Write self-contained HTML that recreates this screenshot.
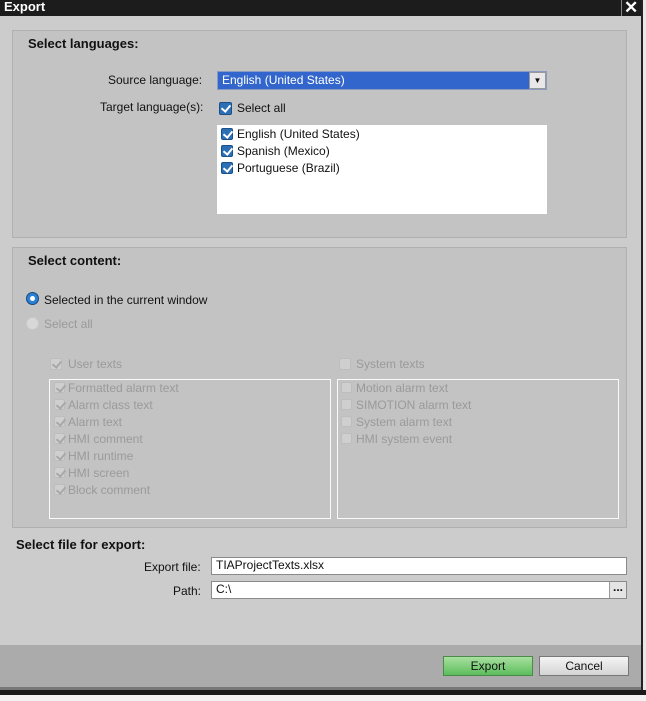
<!DOCTYPE html><html><head><style>
*{margin:0;padding:0;box-sizing:border-box}
body{width:646px;height:701px;overflow:hidden;background:#f0f0f0;font-family:"Liberation Sans",sans-serif;font-size:12px;color:#111;position:relative}
.a{position:absolute}
.dlg{left:0;top:0;width:641px;height:690px;background:#cccccc}
.title{left:0;top:0;width:641px;height:16px;background:#1c1c1c;color:#fff;font-weight:bold;font-size:13px;padding-left:4px;line-height:14px}
.panel{background:#c3c3c3;border:1px solid #b0b0b0}
.h{font-weight:bold;font-size:13px}
.cb{width:12px;height:12px;background:#2d6fb5;border:1px solid #1a4f8a;border-radius:2px}
.cb:after{content:"";position:absolute;left:3px;top:0px;width:4px;height:7px;border:solid #fff;border-width:0 2px 2px 0;transform:rotate(40deg)}
.cd{width:12px;height:12px;background:#cfcfcf;border:1px solid #bdbdbd;border-radius:2px}
.cd.k:after{content:"";position:absolute;left:3px;top:0px;width:4px;height:7px;border:solid #a8a8a8;border-width:0 2px 2px 0;transform:rotate(40deg)}
.g{color:#9a9a9a}
.box{border:1px solid #fafafa}
.inp{background:#fff;border:1px solid #8a8a8a;padding-left:4px;line-height:15px}
.btn{border:1px solid #777;text-align:center;line-height:18px;font-size:12px}
</style></head><body>
<div class="a dlg"></div>
<div class="a title">Export</div>
<div class="a" style="left:621px;top:0;width:1px;height:16px;background:#888"></div>
<div class="a" style="left:624px;top:-2px;color:#fff;font-size:17px;font-weight:bold">✕</div>
<div class="a" style="left:641px;top:0;width:2px;height:690px;background:#222"></div>
<div class="a" style="left:643px;top:0;width:3px;height:701px;background:#e8e8e8"></div>

<div class="a panel" style="left:12px;top:30px;width:615px;height:208px"></div>
<div class="a h" style="left:28px;top:36px">Select languages:</div>
<div class="a" style="left:108px;top:73px">Source language:</div>
<div class="a" style="left:217px;top:71px;width:330px;height:19px;background:#3366cc;border:1px solid #8a9ac0;color:#fff;padding-left:4px;line-height:17px">English (United States)</div>
<div class="a" style="left:529px;top:72px;width:17px;height:17px;background:#e8e8e8;border:1px solid #999;font-size:8px;text-align:center;line-height:16px">▼</div>
<div class="a" style="left:100px;top:100px">Target language(s):</div>
<div class="a cb" style="left:219px;top:102px;width:13px;height:13px"></div>
<div class="a" style="left:237px;top:101px">Select all</div>
<div class="a" style="left:217px;top:125px;width:330px;height:89px;background:#fff"></div>
<div class="a cb" style="left:221px;top:128px"></div><div class="a" style="left:237px;top:127px">English (United States)</div>
<div class="a cb" style="left:221px;top:145px"></div><div class="a" style="left:237px;top:144px">Spanish (Mexico)</div>
<div class="a cb" style="left:221px;top:162px"></div><div class="a" style="left:237px;top:161px">Portuguese (Brazil)</div>

<div class="a panel" style="left:12px;top:247px;width:615px;height:281px"></div>
<div class="a h" style="left:28px;top:253px">Select content:</div>
<div class="a" style="left:26px;top:292px;width:13px;height:13px;border-radius:50%;background:#2d7fd0;border:1px solid #144a80"></div>
<div class="a" style="left:30px;top:296px;width:5px;height:5px;border-radius:50%;background:#fff"></div>
<div class="a" style="left:44px;top:293px">Selected in the current window</div>
<div class="a" style="left:26px;top:317px;width:13px;height:13px;border-radius:50%;background:#d8d8d8;border:1px solid #c8c8c8"></div>
<div class="a g" style="left:44px;top:317px">Select all</div>

<div class="a cd k" style="left:50px;top:358px"></div><div class="a g" style="left:68px;top:357px">User texts</div>
<div class="a cd" style="left:339px;top:358px"></div><div class="a g" style="left:356px;top:357px">System texts</div>
<div class="a box" style="left:49px;top:379px;width:282px;height:140px"></div>
<div class="a box" style="left:337px;top:379px;width:282px;height:140px"></div>
<div class="a cd k" style="left:54px;top:382px;width:11px;height:11px"></div><div class="a g" style="left:68px;top:381px">Formatted alarm text</div>
<div class="a cd k" style="left:54px;top:399px;width:11px;height:11px"></div><div class="a g" style="left:68px;top:398px">Alarm class text</div>
<div class="a cd k" style="left:54px;top:416px;width:11px;height:11px"></div><div class="a g" style="left:68px;top:415px">Alarm text</div>
<div class="a cd k" style="left:54px;top:433px;width:11px;height:11px"></div><div class="a g" style="left:68px;top:432px">HMI comment</div>
<div class="a cd k" style="left:54px;top:450px;width:11px;height:11px"></div><div class="a g" style="left:68px;top:449px">HMI runtime</div>
<div class="a cd k" style="left:54px;top:467px;width:11px;height:11px"></div><div class="a g" style="left:68px;top:466px">HMI screen</div>
<div class="a cd k" style="left:54px;top:484px;width:11px;height:11px"></div><div class="a g" style="left:68px;top:483px">Block comment</div>
<div class="a cd" style="left:341px;top:382px;width:11px;height:11px"></div><div class="a g" style="left:356px;top:381px">Motion alarm text</div>
<div class="a cd" style="left:341px;top:399px;width:11px;height:11px"></div><div class="a g" style="left:356px;top:398px">SIMOTION alarm text</div>
<div class="a cd" style="left:341px;top:416px;width:11px;height:11px"></div><div class="a g" style="left:356px;top:415px">System alarm text</div>
<div class="a cd" style="left:341px;top:433px;width:11px;height:11px"></div><div class="a g" style="left:356px;top:432px">HMI system event</div>

<div class="a h" style="left:16px;top:537px">Select file for export:</div>
<div class="a" style="left:144px;top:560px">Export file:</div>
<div class="a inp" style="left:211px;top:557px;width:416px;height:18px">TIAProjectTexts.xlsx</div>
<div class="a" style="left:173px;top:584px">Path:</div>
<div class="a inp" style="left:211px;top:581px;width:416px;height:18px">C:\</div>
<div class="a" style="left:609px;top:582px;width:17px;height:16px;background:#e4e4e4;border-left:1px solid #999;text-align:center;line-height:10px;font-weight:bold">...</div>

<div class="a" style="left:0;top:645px;width:641px;height:42px;background:#ababab"></div>
<div class="a" style="left:0;top:687px;width:641px;height:3px;background:#777"></div>
<div class="a" style="left:0;top:690px;width:646px;height:5px;background:#1a1a1a"></div>
<div class="a" style="left:0;top:695px;width:646px;height:6px;background:#f2f2f2"></div>
<div class="a btn" style="left:443px;top:656px;width:90px;height:20px;background:linear-gradient(#a8e0a0,#5cbd5c);border-color:#4a8a4a">Export</div>
<div class="a btn" style="left:539px;top:656px;width:90px;height:20px;background:linear-gradient(#f4f4f4,#d4d4d4)">Cancel</div>
</body></html>
